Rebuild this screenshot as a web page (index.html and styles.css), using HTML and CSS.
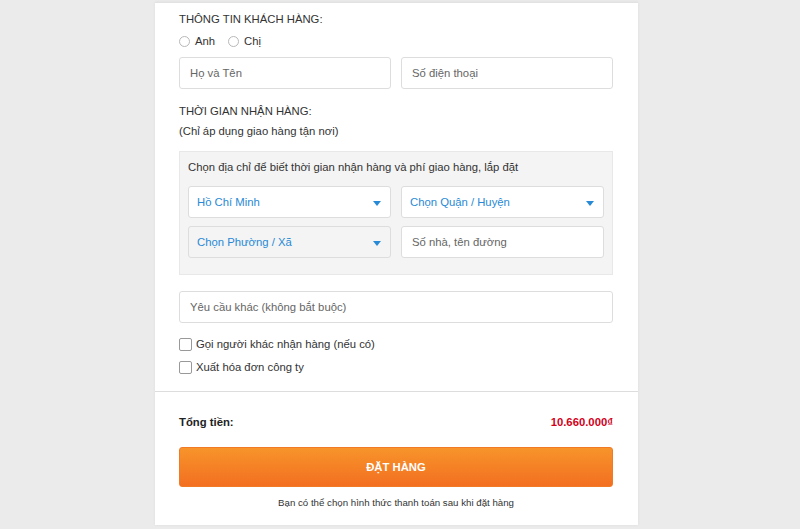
FILE: index.html
```html
<!DOCTYPE html>
<html lang="vi">
<head>
<meta charset="utf-8">
<link rel="stylesheet" href="styles.css">
</head>
<body>
<div class="card">
  <div class="form">
    <div class="title t1">THÔNG TIN KHÁCH HÀNG:</div>
    <div class="radios">
      <label class="radio"><span class="circle"></span>Anh</label>
      <label class="radio"><span class="circle"></span>Chị</label>
    </div>
    <div class="row2">
      <div class="input">Họ và Tên</div>
      <div class="input">Số điện thoại</div>
    </div>
    <div class="title t2">THỜI GIAN NHẬN HÀNG:</div>
    <div class="sub">(Chỉ áp dụng giao hàng tận nơi)</div>
    <div class="addr">
      <div class="addr-title">Chọn địa chỉ để biết thời gian nhận hàng và phí giao hàng, lắp đặt</div>
      <div class="grid">
        <div class="select">Hồ Chí Minh<span class="caret"></span></div>
        <div class="select">Chọn Quận / Huyện<span class="caret"></span></div>
        <div class="select disabled">Chọn Phường / Xã<span class="caret"></span></div>
        <div class="input">Số nhà, tên đường</div>
      </div>
    </div>
    <div class="input wide">Yêu cầu khác (không bắt buộc)</div>
    <div class="checks">
      <label class="check"><span class="box"></span>Gọi người khác nhận hàng (nếu có)</label>
      <label class="check"><span class="box"></span>Xuất hóa đơn công ty</label>
    </div>
  </div>
  <div class="total-area">
    <div class="total">
      <span class="total-label">Tổng tiền:</span>
      <span class="total-price">10.660.000₫</span>
    </div>
    <div class="btn">ĐẶT HÀNG</div>
    <div class="note">Bạn có thể chọn hình thức thanh toán sau khi đặt hàng</div>
  </div>
</div>
</body>
</html>
```
FILE: styles.css
```css
* { box-sizing: border-box; }
html, body { margin: 0; padding: 0; }
body {
  background: #ebebeb;
  font-family: "Liberation Sans", Arial, sans-serif;
  font-size: 11.3px;
  color: #333;
  height: 529px;
  overflow: hidden;
}
.card {
  width: 483px;
  margin-left: 155px;
  background: #fff;
  border-top: 1px solid #e2e2e2;
  margin-top: 2px;
  height: 523px;
  box-shadow: 0 0 3px rgba(0,0,0,0.06);
}
.form {
  padding: 8px 25px 0 24px;
  border-bottom: 1px solid #ddd;
  height: 389px;
}
.title { line-height: 16px; color: #333; }
.radios { display: flex; gap: 13px; margin-top: 6px; }
.radio { display: flex; align-items: center; line-height: 16px; }
.circle {
  width: 11px; height: 11px; border: 1px solid #b8b8b8; border-radius: 50%;
  margin-right: 5px; background: #fff;
}
.row2 { display: flex; gap: 10px; margin-top: 8px; }
.row2 .input { flex: 1; }
.input {
  height: 32px; border: 1px solid #ddd; border-radius: 3px; background: #fff;
  padding: 0 10px; line-height: 30px; color: #666;
}
.t2 { margin-top: 14px; }
.sub { line-height: 16px; margin-top: 4px; }
.addr {
  margin-top: 12px; background: #f4f4f4; border: 1px solid #e8e8e8;
  padding: 7px 8px 16px 8px; height: 124px;
}
.addr-title { line-height: 16px; }
.grid {
  display: grid; grid-template-columns: 1fr 1fr; column-gap: 10px; row-gap: 8px;
  margin-top: 11px;
}
.select {
  position: relative; height: 32px; border: 1px solid #ddd; border-radius: 3px;
  background: #fff; padding: 0 8px; line-height: 30px; color: #288ad6;
}
.select.disabled { background: #f4f4f4; }
.caret {
  position: absolute; right: 9px; top: 14px;
  width: 0; height: 0;
  border-left: 4.5px solid transparent; border-right: 4.5px solid transparent;
  border-top: 5px solid #288ad6;
}
.grid .input { color: #666; }
.wide { margin-top: 16px; }
.checks { margin-top: 13px; display: flex; flex-direction: column; gap: 7px; }
.check { display: flex; align-items: center; line-height: 16px; }
.box {
  width: 13px; height: 13px; border: 1px solid #999; border-radius: 2px;
  margin-right: 4px; background: #fff;
}
.total-area { padding: 0 25px 0 24px; }
.total {
  display: flex; justify-content: space-between; align-items: center;
  margin-top: 22px; line-height: 16px;
}
.total-label { font-weight: bold; color: #222; }
.total-price { font-weight: bold; color: #d0021b; font-size: 11.3px; }
.btn {
  margin-top: 17px; height: 40px; border-radius: 3px;
  background: linear-gradient(#f7942a, #f36f21);
  color: #fff; font-weight: bold; text-align: center; line-height: 38px;
  border: 1px solid #f07a25;
}
.note { text-align: center; font-size: 9.7px; margin-top: 9px; color: #333; line-height: 14px; }
```
